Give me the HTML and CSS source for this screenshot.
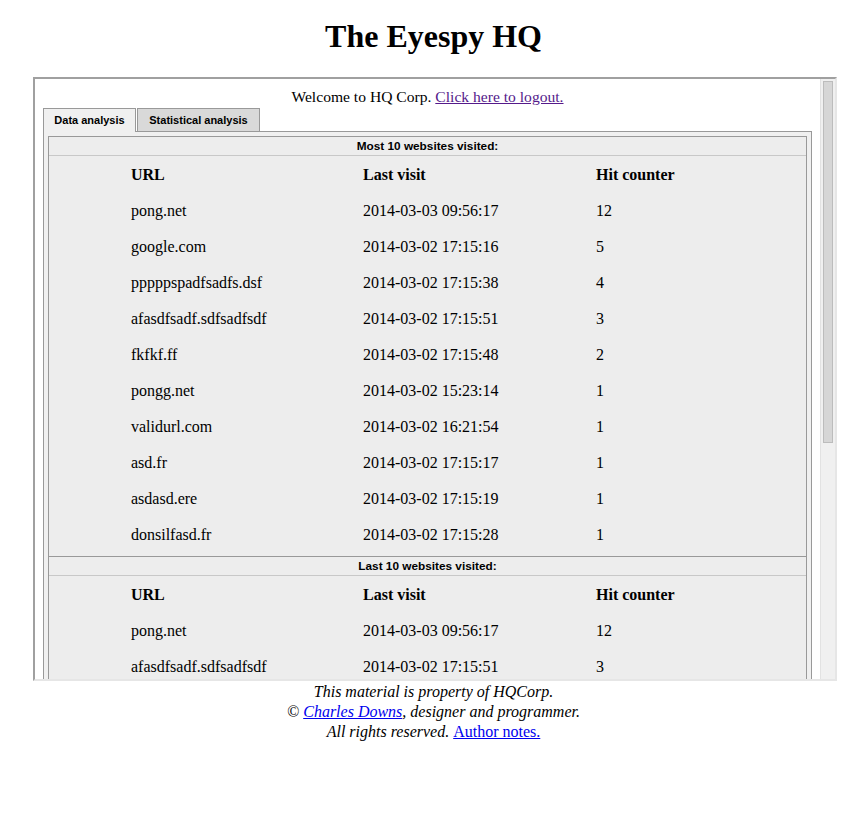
FILE: index.html
```html
<!DOCTYPE html>
<html>
<head>
<meta charset="utf-8">
<title>The Eyespy HQ</title>
<link rel="stylesheet" href="styles.css">
</head>
<body>
<h1 class="title">The Eyespy HQ</h1>
<div class="frame">
  <div class="viewport">
    <div class="doc">
      <div class="welcome">Welcome to HQ Corp. <a class="visited" href="#">Click here to logout.</a></div>
      <div class="tabs">
        <div class="tab tab-active">Data analysis</div>
        <div class="tab">Statistical analysis</div>
      </div>
      <div class="panel">
        <section class="sheet">
          <div class="caption">Most 10 websites visited:</div>
          <div class="rows">
            <div class="row head"><span>URL</span><span>Last visit</span><span>Hit counter</span></div>
            <div class="row"><span>pong.net</span><span>2014-03-03 09:56:17</span><span>12</span></div>
            <div class="row"><span>google.com</span><span>2014-03-02 17:15:16</span><span>5</span></div>
            <div class="row"><span>pppppspadfsadfs.dsf</span><span>2014-03-02 17:15:38</span><span>4</span></div>
            <div class="row"><span>afasdfsadf.sdfsadfsdf</span><span>2014-03-02 17:15:51</span><span>3</span></div>
            <div class="row"><span>fkfkf.ff</span><span>2014-03-02 17:15:48</span><span>2</span></div>
            <div class="row"><span>pongg.net</span><span>2014-03-02 15:23:14</span><span>1</span></div>
            <div class="row"><span>validurl.com</span><span>2014-03-02 16:21:54</span><span>1</span></div>
            <div class="row"><span>asd.fr</span><span>2014-03-02 17:15:17</span><span>1</span></div>
            <div class="row"><span>asdasd.ere</span><span>2014-03-02 17:15:19</span><span>1</span></div>
            <div class="row"><span>donsilfasd.fr</span><span>2014-03-02 17:15:28</span><span>1</span></div>
          </div>
        </section>
        <section class="sheet">
          <div class="caption">Last 10 websites visited:</div>
          <div class="rows">
            <div class="row head"><span>URL</span><span>Last visit</span><span>Hit counter</span></div>
            <div class="row"><span>pong.net</span><span>2014-03-03 09:56:17</span><span>12</span></div>
            <div class="row"><span>afasdfsadf.sdfsadfsdf</span><span>2014-03-02 17:15:51</span><span>3</span></div>
          </div>
        </section>
      </div>
    </div>
  </div>
  <div class="scrollbar"><div class="thumb"></div></div>
</div>
<footer class="footer">
  <div>This material is property of HQCorp.</div>
  <div>© <a href="#">Charles Downs</a>, designer and programmer.</div>
  <div>All rights reserved. <a class="plain" href="#">Author notes.</a></div>
</footer>
</body>
</html>
```
FILE: styles.css
```css
html, body {
  margin: 0;
  padding: 0;
  background: #fff;
}

body {
  font-family: "Liberation Serif", "Times New Roman", serif;
  font-size: 16px;
  color: #000;
}

a {
  color: #0000ee;
}

a.visited {
  color: #551a8b;
}

.title {
  margin: 18px 0 22px;
  font-size: 32px;
  font-weight: bold;
  line-height: 37px;
  text-align: center;
}

.frame {
  display: flex;
  width: 800px;
  height: 600px;
  margin-left: 33px;
  border: 2px solid;
  border-color: #a0a0a0 #e6e6e6 #e6e6e6 #a0a0a0;
}

.viewport {
  flex: 1;
  overflow: hidden;
  background: #fff;
}

.doc {
  padding: 8px;
}

.welcome {
  padding-top: 1px;
  font-size: 15.6px;
  line-height: 18px;
  text-align: center;
}

.tabs {
  display: flex;
  align-items: flex-start;
  gap: 1px;
  height: 23px;
  margin-top: 2px;
  font-family: "Liberation Sans", Arial, sans-serif;
  font-size: 11px;
  font-weight: bold;
}

.tab {
  box-sizing: border-box;
  width: 123px;
  height: 23px;
  border: 1px solid #999;
  border-bottom: 0;
  background: #d9d9d9;
  line-height: 22px;
  text-align: center;
}

.tab-active {
  position: relative;
  z-index: 1;
  width: 93px;
  height: 24px;
  background: #f0f0f0;
}

.panel {
  border: 1px solid #999;
  background: #f0f0f0;
  padding: 4px;
}

.sheet {
  border: 1px solid #999;
  background: #ededed;
}

.sheet + .sheet {
  border-top: 0;
}

.caption {
  height: 18px;
  border-bottom: 1px solid #c8c8c8;
  font-family: "Liberation Sans", Arial, sans-serif;
  font-size: 11.8px;
  font-weight: bold;
  line-height: 19px;
  text-align: center;
}

.rows {
  padding: 1px 0 3px;
}

.row {
  display: grid;
  grid-template-columns: 232px 233px 1fr;
  align-items: center;
  height: 36px;
  padding-left: 82px;
}

.row.head {
  font-weight: bold;
}

.scrollbar {
  box-sizing: border-box;
  width: 15px;
  background: #f0f0f0;
  border-left: 1px solid #e2e2e2;
}

.thumb {
  box-sizing: border-box;
  height: 362px;
  margin: 2px 2px 0 2px;
  background: #d6d6d6;
  border: 1px solid #bcbcbc;
}

.footer {
  padding-top: 1px;
  font-style: italic;
  line-height: 20px;
  text-align: center;
}

.footer .plain {
  font-style: normal;
}
```
